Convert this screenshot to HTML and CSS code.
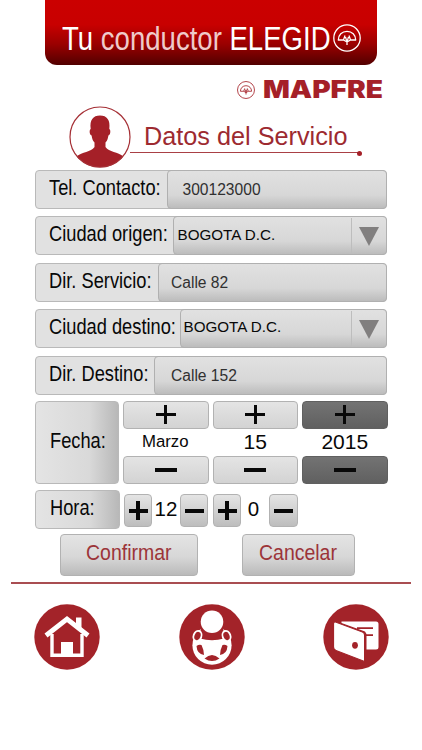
FILE: index.html
```html
<!DOCTYPE html>
<html lang="es">
<head>
<meta charset="utf-8">
<title>Tu conductor elegido</title>
<link rel="stylesheet" href="styles.css">
</head>
<body>
<svg class="defs" aria-hidden="true">
  <symbol id="emblem" viewBox="0 0 28 28">
    <g fill="none" stroke="currentColor" stroke-width="1.300" stroke-linejoin="round">
      <circle cx="14" cy="14" r="13.200"/>
      <path d="M5.300 16C5.300 11 9 7.300 14 7.300S22.700 11 22.700 16H17.500L14 18L10.500 16ZM10.500 16L12 11.500M17.500 16L16 11.500M12.500 13L14 18L15.500 13M14 18V21"/>
    </g>
  </symbol>
</svg>
<header class="banner">
  <h1><span class="tu">Tu</span> <span class="soft">conductor</span> ELEGID</h1>
  <svg class="banner-o"><use href="#emblem"/></svg>
</header>
<div class="brand">
  <svg class="brand-emblem"><use href="#emblem"/></svg>
  <svg class="brand-name" viewBox="0 0 126 28"><text x="1" y="23" textLength="120" lengthAdjust="spacingAndGlyphs">MAPFRE</text></svg>
</div>
<section class="title">
  <svg class="avatar" viewBox="0 0 62 62">
    <clipPath id="c"><circle cx="31" cy="31" r="30.500"/></clipPath>
    <path clip-path="url(#c)" fill="#a52028" d="M25.500 44V36.500C23.500 34.500 23 32 22.600 29.500C20.500 29 20 24 21.700 23C20.500 14 24 9.500 31 9.500S41.500 14 40.300 23C42 24 41.500 29 39.400 29.500C39 32 38.500 34.500 36.500 36.500V41C40 46 49 46 54.500 50.500V62H7.500V50.500C13 46 22 46 25.500 41Z"/>
    <circle cx="31" cy="31" r="30" fill="none" stroke="#a52f35" stroke-width="1.200"/>
  </svg>
  <div class="title-line"><h2>Datos del Servicio</h2></div>
</section>
<main class="form">
  <div class="row"><label class="tel"><span>Tel. Contacto:</span></label><div class="value tel-value">300123000</div></div>
  <div class="row"><label class="origin"><span>Ciudad origen:</span></label><div class="value city">BOGOTA D.C.<i class="arrow"></i></div></div>
  <div class="row"><label class="service"><span>Dir. Servicio:</span></label><div class="value">Calle 82</div></div>
  <div class="row"><label class="destination"><span>Ciudad destino:</span></label><div class="value city destination-city">BOGOTA D.C.<i class="arrow"></i></div></div>
  <div class="row"><label class="address"><span>Dir. Destino:</span></label><div class="value address-value">Calle 152</div></div>
  <div class="date">
    <div class="caption"><span>Fecha:</span></div>
    <div class="spinner month"><button class="plus"></button><output>Marzo</output><button class="minus"></button></div>
    <div class="spinner"><button class="plus"></button><output>15</output><button class="minus"></button></div>
    <div class="spinner dark"><button class="plus"></button><output>2015</output><button class="minus"></button></div>
  </div>
  <div class="time">
    <div class="caption"><span>Hora:</span></div>
    <button class="plus"></button><output>12</output><button class="minus"></button>
    <button class="plus second"></button><output class="minutes">0</output><button class="minus last"></button>
  </div>
  <div class="actions">
    <button class="confirm"><span>Confirmar</span></button>
    <button class="cancel"><span>Cancelar</span></button>
  </div>
</main>
<nav>
  <svg viewBox="0 0 66 66">
    <circle cx="33" cy="33" r="32.700" fill="#a32329"/>
    <path fill="none" stroke="#fff" stroke-width="3.400" d="M18 30V51.300H48V30"/>
    <path fill="none" stroke="#fff" stroke-width="4.800" d="M12 31.500L33 15L54 31.500"/>
    <path fill="#fff" d="M42 13.500H47.500V26L42 21ZM27 38H39V52H27Z"/>
  </svg>
  <svg viewBox="0 0 66 66">
    <circle cx="33" cy="33" r="32.700" fill="#a32329"/>
    <circle cx="33" cy="41.200" r="19.600" fill="#fff"/>
    <path fill="#a32329" d="M21 34.500L22 20H44L45 34.500Q33 38 21 34.500ZM17.500 42Q20 40 22.500 41Q25 46 25 51Q18 50 17.500 42ZM48.500 42Q46 40 43.500 41Q41 46 41 51Q48 50 48.500 42ZM25.500 54.500Q33 47.500 40.500 54.500Q33 59.500 25.500 54.500Z"/>
    <circle cx="33" cy="17.800" r="11.300" fill="#fff"/>
    <g fill="#a32329" stroke="#fff" stroke-width="1.800"><ellipse cx="18.500" cy="32" rx="3.900" ry="5.200" transform="rotate(20 18.500 32)"/><ellipse cx="47.500" cy="32" rx="3.900" ry="5.200" transform="rotate(-20 47.500 32)"/></g>
  </svg>
  <svg viewBox="0 0 66 66">
    <circle cx="33" cy="33" r="32.700" fill="#a32329"/>
    <path fill="#fff" d="M18.500 17.500H53Q55.500 17.500 55.500 20V43Q55.500 45.500 53 45.500H43.500V30L42 27.500L18.500 19Z"/>
    <path stroke="#a32329" stroke-width="1.800" d="M34 24.200H50M42 31.200H50"/>
    <path fill="#fff" stroke="#a32329" stroke-width="1.200" d="M12.500 18L39.500 28Q41.600 29 41.600 31V57.500L13 46.500Q10.500 45.500 10.500 43V20Q10.500 17.500 12.500 18Z"/>
    <ellipse cx="32" cy="41.300" rx="2.900" ry="3.400" fill="#a32329"/>
  </svg>
</nav>
</body>
</html>
```
FILE: styles.css
```css
* { box-sizing: border-box; }
body { margin: 0; width: 422px; height: 750px; overflow: hidden; background: #fff; color: #080808; font-family: "Liberation Sans", Arial, sans-serif; }
.defs { display: none; }
svg { display: block; flex: none; }
h1, h2 { margin: 0; font-weight: 400; white-space: nowrap; }
.banner { display: flex; width: 332px; height: 65px; margin-left: 45px; padding-left: 17px; border-radius: 0 0 12px 12px; background: linear-gradient(#cb0000 0, #c80000 38%, #9a0000 68%, #520000 100%); color: #fff; }
.banner h1 { width: 271px; padding-top: 20px; font-size: 33px; line-height: 37px; transform: scaleX(.835); transform-origin: left; }
.soft { color: #efcaca; }
.banner-o { width: 28px; height: 28px; margin-top: 24px; }
.brand { display: flex; align-items: center; height: 20px; margin: 14px 0 0 237px; color: #a52028; }
.brand-emblem { width: 18px; height: 18px; margin-top: 1px; }
.brand-name { width: 126px; height: 28px; margin-left: 7px; }
.brand-name text { font: 900 24px Inter, sans-serif; fill: #a52028; }
.title { display: flex; height: 62px; margin: 7px 0 0 69px; }
.avatar { width: 62px; height: 62px; }
.title-line { position: relative; width: 231px; height: 47px; padding: 15px 0 0 13.500px; border-bottom: 1.500px solid #a94045; margin-left: -1px; }
.title-line::after { content: ""; position: absolute; right: -1px; bottom: -3.500px; width: 5px; height: 5px; border-radius: 50%; background: #a52028; }
h2 { font-size: 25px; line-height: 30px; color: #9d2a30; transform: scaleX(1.01); transform-origin: left; }
.form { width: 353px; margin: 2px 0 0 34px; }
.row { display: flex; height: 39px; margin: 0 0 7.400px .500px; border: 1px solid #b9b9b9; border-radius: 4px; background: #e1e1e1; }
label { flex: none; padding-left: 13.500px; }
label span, .caption span, .actions span { display: block; width: max-content; font-size: 22px; line-height: 33px; white-space: nowrap; transform: scaleX(.83); transform-origin: left; }
.tel { width: 132px; } .origin { width: 138px; } .service { width: 123px; } .destination { width: 145px; } .address { width: 119px; }
.value { position: relative; flex: 1; margin: -1px; padding-left: 12.500px; border: 1px solid #b0b0b0; border-radius: 4px; background: linear-gradient(#e1e1e1, #d7d7d7 65%, #bcbcbc); font-size: 15.600px; line-height: 37px; color: #303030; }
.tel-value { padding-left: 15px; }
.address-value { padding-left: 16.500px; line-height: 38px; }
.city { padding-left: 4px; color: #080808; font-size: 15.200px; line-height: 35px; }
.destination-city { padding-left: 3px; line-height: 33px; }
.arrow { position: absolute; right: 0; top: 1px; width: 35px; height: 35px; border-left: 1px solid #bdbdbd; }
.arrow::after { content: ""; position: absolute; left: 7px; top: 9px; border: solid transparent; border-width: 19px 10.500px 0; border-top-color: #817f7f; }
.date { display: flex; gap: 4px; height: 83px; margin: -1px 0 0 .500px; }
.caption { width: 85px; height: 100%; padding-left: 14px; border: 1px solid #b9b9b9; border-radius: 4px; background: linear-gradient(90deg, #e4e4e4, #d9d9d9 65%, #b8b8b8); flex: none; }
.date .caption { width: 84.500px; }
.date .caption span { margin-top: 22px; }
button { position: relative; flex: none; padding: 0; border: 1px solid #b2b2b2; border-radius: 4px; background: linear-gradient(#e4e4e4, #d3d3d3); font-family: inherit; }
.spinner { display: flex; flex-direction: column; width: 85.500px; height: 83px; }
.spinner button { width: 85.500px; height: 28px; }
.plus::before, .minus::before, .plus::after { content: ""; position: absolute; inset: 0; width: 20px; height: 3px; margin: auto; background: #080808; }
.plus::after { width: 3px; height: 19px; }
.minus::before { width: 22px; height: 4px; }
.spinner output { height: 27px; font-size: 21px; line-height: 25px; text-align: center; }
.month output { padding-right: 1px; font-size: 16.800px; line-height: 25px; }
.dark button { background: linear-gradient(#737373, #606060); border-color: #606060; }
.time { display: flex; height: 39px; margin: 6.500px 0 0 .500px; }
.time button { width: 28px; height: 33px; margin-top: 4px; background: linear-gradient(#e4e4e4, #cecece 60%, #bdbdbd); }
.time .caption + button { margin-left: 4.500px; }
.time .plus::before, .time .minus::before { width: 19px; height: 4px; }
.time .plus::after { width: 4px; }
.time output { width: 28px; font-size: 20.500px; line-height: 37px; text-align: center; }
.time .second { margin-left: 5px; }
.time .minutes { width: 28px; padding-right: 3px; }
.time .last { width: 29px; }
.actions { display: flex; margin-top: 5px; padding-left: 26px; gap: 44px; }
.actions button { width: 138px; height: 42px; padding-left: 25px; color: #9c3439; background: linear-gradient(#e4e4e4, #d7d7d7 55%, #bababa); }
.actions .cancel { width: 113px; padding-left: 16px; }
.actions span { line-height: 34px; height: 38px; transform: scaleX(.885); }
nav { display: flex; justify-content: space-between; width: 400px; margin: 5.500px 0 0 11px; padding: 20.500px 22px 0 23px; border-top: 2px solid #a94d51; }
nav svg { width: 66px; height: 66px; }
```
